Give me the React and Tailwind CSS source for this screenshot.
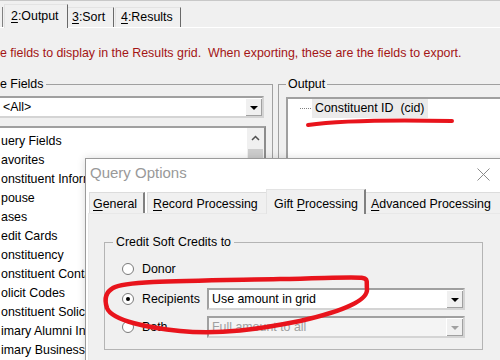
import React from 'react';

const fields = [
  'uery Fields',
  'avorites',
  'onstituent Information',
  'pouse',
  'ases',
  'edit Cards',
  'onstituency',
  'onstituent Contacts',
  'olicit Codes',
  'onstituent Solicitors',
  'imary Alumni Information',
  'imary Business',
];

const DownArrow = ({ color = '#000' }) => (
  <svg width="8" height="4" viewBox="0 0 8 4">
    <path d="M0 0h8L4 4z" fill={color} />
  </svg>
);

const Combo = ({ text, width, disabled, pad = 3 }) => (
  <div
    className={`flex h-[22px] items-stretch border-2 border-t-[#a0a0a0] border-l-[#a0a0a0] border-b-[#d4d4d4] border-r-[#d4d4d4] ${
      disabled ? 'bg-[#f4f4f4] text-[#a0a0a0]' : 'bg-white text-black'
    }`}
    style={{ width }}
  >
    <span className="flex-1 leading-[18px] whitespace-nowrap overflow-hidden" style={{ paddingLeft: pad }}>{text}</span>
    <span className="flex w-[17px] items-center justify-center bg-[#f0f0f0] border-l border-t border-white shadow-[inset_-1px_-1px_0_#a0a0a0]">
      <DownArrow color={disabled ? '#a0a0a0' : '#000'} />
    </span>
  </div>
);

const Radio = ({ checked }) => (
  <span className="flex h-[12px] w-[12px] items-center justify-center rounded-full border border-[#7a7a7a] bg-white">
    {checked && <span className="h-[4px] w-[4px] rounded-full bg-black" />}
  </span>
);

const Mn = ({ children }) => <span className="underline underline-offset-2">{children}</span>;

export default function App() {
  return (
    <div className="relative h-[360px] w-[500px] overflow-hidden bg-[#f0f0f0] text-[12.4px] text-black font-['Liberation_Sans',Arial,sans-serif]">
      {/* main window tabs */}
      <div className="flex h-[28px] items-end border-t border-[#c8c8c8] border-b border-b-white">
        <div className="h-[20px] w-[3px] border-r border-[#808080]" />
        <div className="relative z-10 -mb-px ml-px h-[24px] w-[64px] border-l border-t border-[#e3e3e3] border-r border-r-[#696969] bg-[#f0f0f0] pl-[6px] pt-[4px] leading-[14px]">
          <Mn>2</Mn>:Output
        </div>
        <div className="h-[20px] w-[46px] border-t border-[#e3e3e3] border-r border-r-[#696969] pl-[4px] pt-[2px] leading-[14px]">
          <Mn>3</Mn>:Sort
        </div>
        <div className="ml-px h-[20px] w-[66px] border-l border-t border-[#e3e3e3] border-r border-r-[#696969] pl-[5px] pt-[2px] leading-[14px]">
          <Mn>4</Mn>:Results
        </div>
      </div>

      <div className="mt-[18px] h-[14px] whitespace-nowrap leading-[14px] text-[#a31515]">
        e fields to display in the Results grid.&nbsp; When exporting, these are the fields to export.
      </div>

      <div className="mt-[17px] flex items-start">
        {/* available fields */}
        <fieldset className="-ml-[10px] h-[300px] w-[283px] shrink-0 border border-[#a0a0a0] pl-[9px]">
          <legend className="pr-[3px] leading-[14px]">e Fields</legend>
          <div className="-ml-[6px] mt-[5px] w-[270px]">
            <Combo text="<All>" width={270} pad={7} />
          </div>
          <div className="-ml-[6px] mt-[8px] flex h-[260px] w-[272px] border-2 border-t-[#a0a0a0] border-l-[#a0a0a0] border-b-[#e3e3e3] border-r-[#8c8c8c] bg-white">
            <div className="flex-1 overflow-hidden pl-[5px] pt-[4px]">
              {fields.map((f) => (
                <div key={f} className="h-[19px] whitespace-nowrap leading-[19px]">{f}</div>
              ))}
            </div>
            <div className="w-[17px] bg-[#f0f0f0]">
              <div className="flex h-[19px] items-center justify-center">
                <svg width="9" height="6" viewBox="0 0 9 6">
                  <path d="M1 5L4.5 1.5L8 5" fill="none" stroke="#505050" strokeWidth="1.5" />
                </svg>
              </div>
              <div className="mx-px mt-[2px] h-[120px] bg-[#cdcdcd]" />
            </div>
          </div>
        </fieldset>

        {/* output */}
        <fieldset className="ml-[5px] h-[300px] w-[240px] shrink-0 border border-[#a0a0a0] pl-[7px]">
          <legend className="px-[2px] leading-[14px]">Output</legend>
          <div className="mt-[6px] h-[90px] border-2 border-t-[#a0a0a0] border-l-[#a0a0a0] border-b-[#e3e3e3] border-r-[#e3e3e3] bg-white">
            <div className="flex h-[19px] items-center pl-[12px]">
              <span className="w-[11px] border-t border-dotted border-[#808080]" />
              <span className="ml-px bg-[#ebebeb] px-[3px] leading-[19px] whitespace-nowrap">Constituent ID&nbsp; (cid)</span>
            </div>
          </div>
        </fieldset>
      </div>

      {/* Query Options dialog */}
      <div className="absolute left-[85px] top-[158px] h-[220px] w-[430px] border border-[#9a9a9a] bg-white shadow-[0_0_8px_rgba(0,0,0,0.15)]">
        <div className="flex h-[31px] items-center pb-[3px] pl-[4px]">
          <span className="text-[15px] leading-[18px] text-[#999]">Query Options</span>
          <svg className="ml-auto mr-[24px] mt-[2px]" width="13" height="13" viewBox="0 0 13 13">
            <path d="M0.5 0.5L12.5 12.5M12.5 0.5L0.5 12.5" stroke="#8a8a8a" strokeWidth="1" />
          </svg>
        </div>
        <div className="flex h-[23px] items-end pl-[3px]">
          <div className="h-[21px] w-[56px] border-l border-t border-[#dcdcdc] border-r-2 border-r-[#808080] bg-[#f0f0f0] pl-[3px] pt-[4px] leading-[14px]">
            <Mn>G</Mn>eneral
          </div>
          <div className="ml-[2px] h-[21px] w-[119px] border-l border-t border-[#dcdcdc] bg-[#f0f0f0] pl-[5px] pt-[4px] leading-[14px]">
            <Mn>R</Mn>ecord Processing
          </div>
          <div className="relative z-10 -mb-px h-[25px] w-[100px] border-l border-t border-[#e3e3e3] border-r-2 border-r-[#808080] bg-[#f0f0f0] pl-[7px] pt-[7px] leading-[14px]">
            Gift <Mn>P</Mn>rocessing
          </div>
          <div className="h-[21px] w-[140px] border-t border-[#dcdcdc] bg-[#f0f0f0] pl-[5px] pt-[4px] leading-[14px] whitespace-nowrap">
            <Mn>A</Mn>dvanced Processing
          </div>
        </div>
        <div className="ml-[2px] h-[200px] border-l border-t border-[#e8e8e8] bg-[#f0f0f0] pt-[21px]">
          <fieldset className="ml-[15px] w-[379px] border border-[#b4b4b4] pb-[11px] pl-[8px]">
            <legend className="px-[3px] leading-[14px]">Credit Soft Credits to</legend>
            <div className="ml-[9px] mt-[9px] flex h-[22px] items-center">
              <Radio />
              <span className="ml-[8px] w-[65px] leading-[14px]">Donor</span>
            </div>
            <div className="ml-[9px] mt-[8px] flex h-[22px] items-center">
              <Radio checked />
              <span className="ml-[8px] w-[65px] leading-[14px]">Recipients</span>
              <Combo text="Use amount in grid" width={258} />
            </div>
            <div className="ml-[9px] mt-[6px] flex h-[22px] items-center">
              <Radio />
              <span className="ml-[8px] w-[65px] leading-[14px]">Both</span>
              <Combo text="Full amount to all" width={258} disabled />
            </div>
          </fieldset>
        </div>
      </div>

      {/* red annotations */}
      <svg className="pointer-events-none absolute left-0 top-0" width="500" height="360" viewBox="0 0 500 360">
        <path d="M308 125 Q350 119 452 121" fill="none" stroke="#e8141c" strokeWidth="4" strokeLinecap="round" />
        <path
          d="M113 288 C125 281 180 281 280 279 S365 274 367 289 C368 300 345 311 300 321 C260 329 220 335 180 331 C150 328 112 321 107 308 C104 299 106 292 113 288"
          fill="none"
          stroke="#e8141c"
          strokeWidth="4.5"
          strokeLinecap="round"
        />
      </svg>
    </div>
  );
}
